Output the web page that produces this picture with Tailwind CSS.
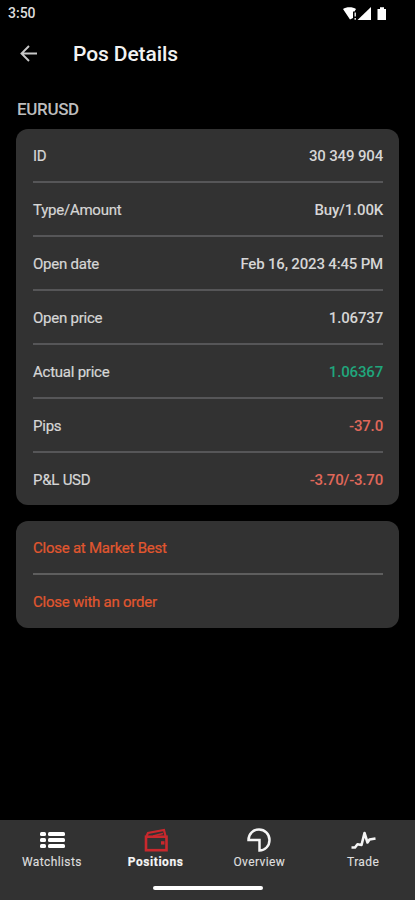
<!DOCTYPE html>
<html lang="en">
<head>
<meta charset="utf-8">
<title>Pos Details</title>
<script src="https://cdn.jsdelivr.net/npm/@tailwindcss/browser@4"></script>
</head>
<body class="bg-black font-['Roboto',sans-serif]">
<div class="w-[415px] h-[900px] bg-black flex flex-col overflow-hidden text-[#d6d6d6]">
  <div class="h-[27px] shrink-0 flex items-center justify-between pl-[8px] pr-[27px]">
    <span class="text-[14px] font-medium leading-[27px] text-[#dddddd]">3:50</span>
    <svg class="w-[46px] h-[15px]" viewBox="0 0 46 15" fill="#fff">
      <path d="M1 3C4 .5 11 .5 14 3L12.500 5.500H11V12L8 13.500Z"/>
      <path d="M13.200 6.500v4M13.200 12v1.800" stroke="#fff" stroke-width="1.300"/>
      <path d="M15.500 14L29 1V14Z"/>
      <path d="M35.500 3H38V1.200H42V3H44V14H35.500Z"/>
    </svg>
  </div>
  <header class="h-[54px] shrink-0 flex items-center pl-[20px]">
    <svg class="mb-[2px] w-[17px] h-[17px]" viewBox="0 0 17 17" fill="none" stroke="#c8c8c8" stroke-width="1.900"><path d="M17 8.500H1.500M9 1L1.500 8.500L9 16"/></svg>
    <h1 class="ml-[36px] pt-[1px] text-[21px] font-medium tracking-[-0.1px] text-[#f2f2f2]">Pos Details</h1>
  </header>
  <h2 class="h-[48px] shrink-0 pl-[17px] pt-[15px] text-[17px] leading-[26px] font-medium tracking-[-0.35px] text-[#bdbdbd]">EURUSD</h2>
  <section class="mx-[16px] h-[376px] shrink-0 rounded-[12px] bg-[#323232] px-[17px] pr-[16px] text-[15px] divide-y-2 divide-[#565658]">
    <div class="h-[54px] flex items-center justify-between pt-[2px]"><span class="tracking-[-0.24px] [-webkit-text-stroke:0.2px]">ID</span><span class="tracking-[-0.16px] font-medium">30 349 904</span></div>
    <div class="h-[54px] flex items-center justify-between pt-[2px]"><span class="tracking-[-0.24px] [-webkit-text-stroke:0.2px]">Type/Amount</span><span class="tracking-[-0.2px] font-medium">Buy/1.00K</span></div>
    <div class="h-[54px] flex items-center justify-between pt-[2px]"><span class="tracking-[-0.24px] [-webkit-text-stroke:0.2px]">Open date</span><span class="tracking-[-0.18px] font-medium">Feb 16, 2023 4:45 PM</span></div>
    <div class="h-[54px] flex items-center justify-between pt-[2px]"><span class="tracking-[-0.24px] [-webkit-text-stroke:0.2px]">Open price</span><span class="tracking-[-0.16px] font-medium">1.06737</span></div>
    <div class="h-[54px] flex items-center justify-between pt-[2px]"><span class="tracking-[-0.24px] [-webkit-text-stroke:0.2px]">Actual price</span><span class="tracking-[-0.16px] font-medium text-[#20a67c]">1.06367</span></div>
    <div class="h-[54px] flex items-center justify-between pt-[2px]"><span class="tracking-[-0.24px] [-webkit-text-stroke:0.2px]">Pips</span><span class="tracking-[-0.16px] font-medium text-[#e0685a]">-37.0</span></div>
    <div class="h-[52px] flex items-center justify-between pt-[2px]"><span class="tracking-[-0.24px] [-webkit-text-stroke:0.2px]">P&amp;L USD</span><span class="tracking-[-0.2px] font-medium text-[#e0685a]">-3.70/-3.70</span></div>
  </section>
  <section class="mx-[16px] mt-[16px] h-[107px] shrink-0 rounded-[12px] bg-[#323232] px-[17px] pr-[16px] text-[15px] text-[#e2572f] divide-y-2 divide-[#5e5e5e]">
    <div class="h-[54px] flex items-center pt-[2px]"><span class="tracking-[-0.24px] [-webkit-text-stroke:0.2px]">Close at Market Best</span></div>
    <div class="h-[53px] flex items-center pt-[2px]"><span class="tracking-[-0.24px] [-webkit-text-stroke:0.2px]">Close with an order</span></div>
  </section>
  <nav class="mt-auto h-[80px] shrink-0 bg-[#323232] flex flex-col items-center">
    <div class="w-full h-[64px] grid grid-cols-4 text-[12px] tracking-[0.4px] text-[#dedede] [-webkit-text-stroke:0.15px]">
      <div class="flex flex-col items-center pt-[8px]">
        <svg class="w-[26px] h-[24px]" viewBox="0 0 26 24" fill="#fff"><rect x="1" y="4" width="6" height="4" rx="1.500"/><rect x="1" y="10" width="6" height="4" rx="1.500"/><rect x="1" y="16" width="6" height="4" rx="1.500"/><rect x="9" y="4" width="17" height="4" rx="1.500"/><rect x="9" y="10" width="17" height="4" rx="1.500"/><rect x="9" y="16" width="17" height="4" rx="1.500"/></svg>
        <span class="mt-[2px] leading-[16px]">Watchlists</span>
      </div>
      <div class="flex flex-col items-center pt-[8px]">
        <svg class="w-[24px] h-[24px]" viewBox="0 0 24 24" fill="none" stroke="#c9282d" stroke-width="2.600"><rect x="2" y="8.700" width="20.500" height="13.500"/><path d="M2.500 8L4 5L20 2L21.500 8" stroke-width="2.200"/><path d="M9 8L19 5.500" stroke-width="1.300"/><path d="M17 13.200H20.500V16.600H17Z" fill="#c9282d" stroke="none"/></svg>
        <span class="mt-[2px] leading-[16px] font-bold tracking-[0.55px] text-[#f5f5f5]">Positions</span>
      </div>
      <div class="flex flex-col items-center pt-[8px]">
        <svg class="w-[24px] h-[24px]" viewBox="0 0 24 24" fill="none" stroke="#f5f5f5" stroke-width="2.500"><path d="M1.500 12C1.500 5.500 6.500 1.500 12 1.500C18 1.500 22.500 6.300 22.500 12C22.500 18 18 22.500 12.500 22.500V12Z"/></svg>
        <span class="mt-[2px] leading-[16px]">Overview</span>
      </div>
      <div class="flex flex-col items-center pt-[8px]">
        <svg class="w-[26px] h-[24px]" viewBox="0 0 26 24" fill="none" stroke="#f5f5f5" stroke-width="2.600" stroke-linejoin="round"><path d="M1.500 19.500H5L7.500 16.300L11.500 17L14.500 5L17.500 14.500L19.500 11.500L25.500 10.500"/></svg>
        <span class="mt-[2px] leading-[16px]">Trade</span>
      </div>
    </div>
    <div class="mt-[2px] w-[110px] h-[4px] rounded-full bg-white"></div>
  </nav>
</div>
</body>
</html>
